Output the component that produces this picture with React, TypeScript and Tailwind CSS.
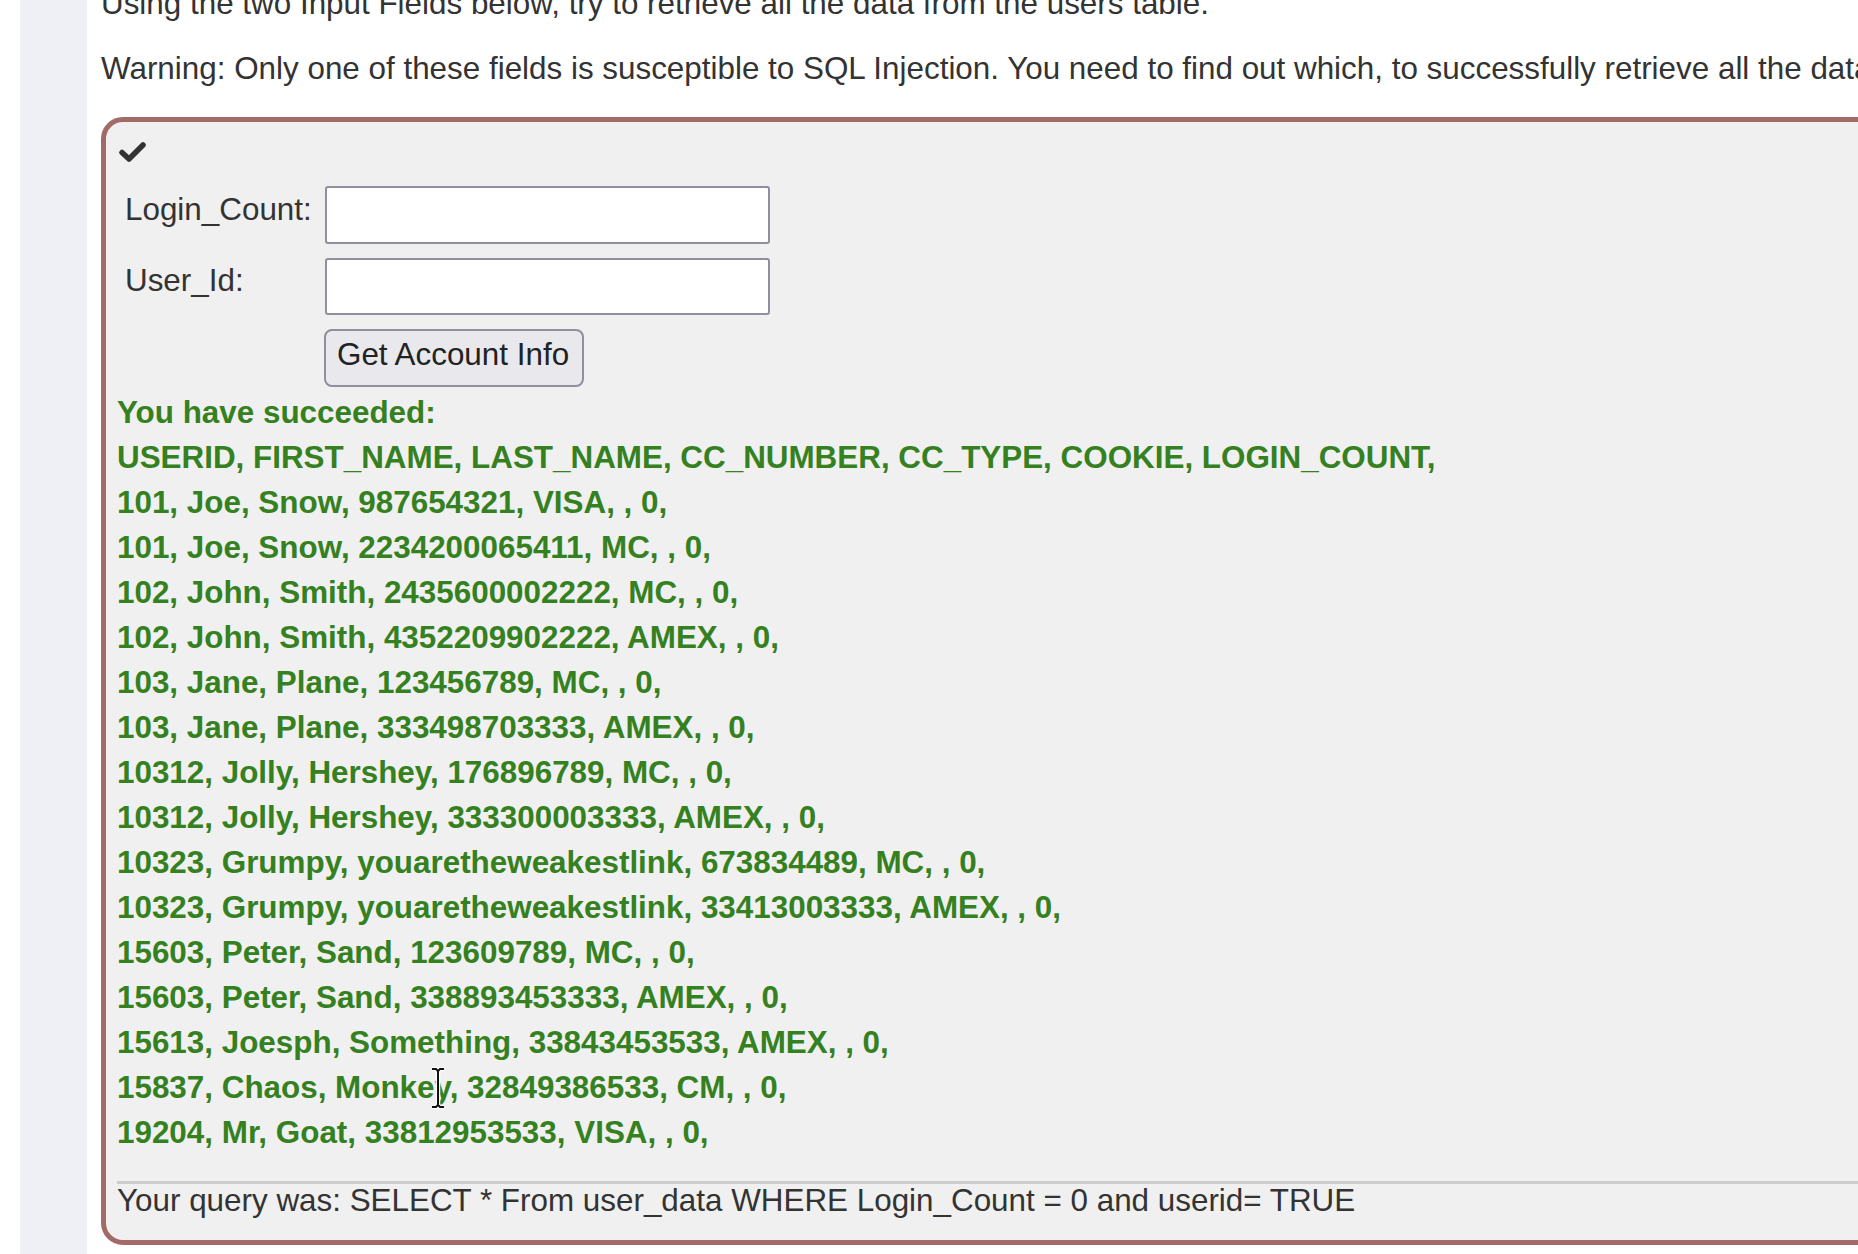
import React from "react";

const rows: string[] = [
    "101, Joe, Snow, 987654321, VISA, , 0,",
    "101, Joe, Snow, 2234200065411, MC, , 0,",
    "102, John, Smith, 2435600002222, MC, , 0,",
    "102, John, Smith, 4352209902222, AMEX, , 0,",
    "103, Jane, Plane, 123456789, MC, , 0,",
    "103, Jane, Plane, 333498703333, AMEX, , 0,",
    "10312, Jolly, Hershey, 176896789, MC, , 0,",
    "10312, Jolly, Hershey, 333300003333, AMEX, , 0,",
    "10323, Grumpy, youaretheweakestlink, 673834489, MC, , 0,",
    "10323, Grumpy, youaretheweakestlink, 33413003333, AMEX, , 0,",
    "15603, Peter, Sand, 123609789, MC, , 0,",
    "15603, Peter, Sand, 338893453333, AMEX, , 0,",
    "15613, Joesph, Something, 33843453533, AMEX, , 0,",
    "15837, Chaos, Monkey, 32849386533, CM, , 0,",
    "19204, Mr, Goat, 33812953533, VISA, , 0,",
];

const CheckIcon: React.FC = () => (
    <svg width="27" height="22" viewBox="0 0 27 22" className="block">
        <path
            d="M3 11.5 L10 18 L24 4"
            fill="none"
            stroke="#333"
            strokeWidth={5.5}
            strokeLinecap="round"
            strokeLinejoin="round"
        />
    </svg>
);

const IBeam: React.FC = () => (
    <svg width="18" height="42" viewBox="0 0 18 42" className="block">
        <path
            d="M3 2 H7 L9 4 L11 2 H15 M9 4 V38 M3 40 H7 L9 38 L11 40 H15"
            fill="none"
            stroke="#fff"
            strokeWidth={4.5}
        />
        <path
            d="M3 2 H7 L9 4 L11 2 H15 M9 4 V38 M3 40 H7 L9 38 L11 40 H15"
            fill="none"
            stroke="#111"
            strokeWidth={2}
        />
    </svg>
);

const App: React.FC = () => {
    return (
        <div
            className="relative w-[1858px] h-[1254px] overflow-hidden bg-white text-[#333] text-[31.4px] leading-[45px]"
            style={{ fontFamily: '"Liberation Sans", Arial, Helvetica, sans-serif' }}
        >
            <div className="flex h-full">
                {/* left strip */}
                <div className="ml-[20px] w-[67px] shrink-0 h-full bg-[#eff0f5]" />

                <div className="pl-[14px] -mt-[19px] whitespace-nowrap">
                    <p>Using the two Input Fields below, try to retrieve all the data from the users table.</p>
                    <p className="mt-[20px]">
                        Warning: Only one of these fields is susceptible to SQL Injection. You need to find out which, to successfully retrieve all the data.
                    </p>

                    {/* attack box */}
                    <div className="mt-[26px] w-[1800px] border-[5px] border-[#a36b68] rounded-[22px] bg-[#f0f0f0] pl-[11px] pt-[19px] pb-[22px]">
                        <div className="pl-[2px]">
                            <CheckIcon />
                        </div>

                        <div className="mt-[23px] flex flex-col gap-[14px]">
                            <div className="flex items-start">
                                <label className="w-[208px] pl-[8px] pt-[1px]">Login_Count:</label>
                                <input
                                    type="text"
                                    className="w-[445px] h-[58px] bg-white border-2 border-[#8f8f9d] rounded-[3px] outline-none"
                                />
                            </div>
                            <div className="flex items-start">
                                <label className="w-[208px] pl-[8px]">User_Id:</label>
                                <input
                                    type="text"
                                    className="w-[445px] h-[57px] bg-white border-2 border-[#8f8f9d] rounded-[3px] outline-none"
                                />
                            </div>
                            <div className="flex">
                                <div className="w-[207px]" />
                                <button className="w-[260px] h-[58px] bg-[#e9e9ed] border-2 border-[#8f8f9d] rounded-[8px] text-[#222] text-left pl-[11px] pb-[8px] leading-[45px]">
                                    Get Account Info
                                </button>
                            </div>
                        </div>

                        <div className="mt-[3px] font-bold text-[#35801f]">
                            <p>You have succeeded:</p>
                            <p>USERID, FIRST_NAME, LAST_NAME, CC_NUMBER, CC_TYPE, COOKIE, LOGIN_COUNT,</p>
                            {rows.map((row) => (
                                <p key={row}>{row}</p>
                            ))}
                        </div>

                        <div className="mt-[26px] h-[3px] bg-[#cccccc]" />
                        <p className="leading-[34px]">
                            Your query was: SELECT * From user_data WHERE Login_Count = 0 and userid= TRUE
                        </p>
                    </div>
                </div>
            </div>

            {/* mouse cursor */}
            <div className="absolute left-[429px] top-[1067px]">
                <IBeam />
            </div>
        </div>
    );
};

export default App;
